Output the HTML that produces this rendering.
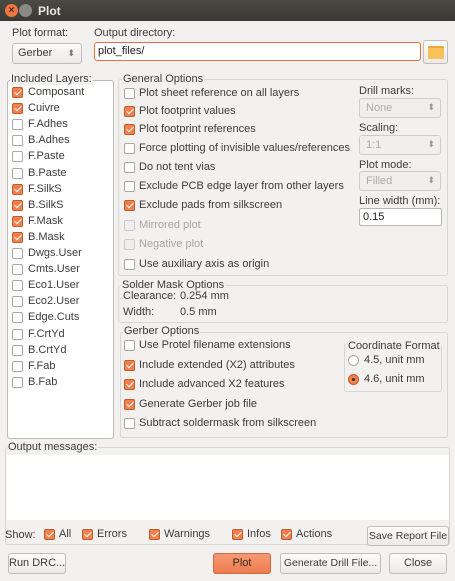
<!DOCTYPE html><html><head><style>
*{box-sizing:border-box;margin:0;padding:0}
body{width:455px;height:581px;background:#f2f1f0;font-family:"Liberation Sans",sans-serif;font-size:11px;color:#3c3c3c;position:relative;overflow:hidden}
.a{position:absolute;white-space:nowrap}
.cb{position:absolute;width:11px;height:11px;border:1px solid #a8a8a8;border-radius:2px;background:#fff}
.cb.on{background:#f0814f;border-color:#c45a2a}
.cb.on::after{content:"";position:absolute;left:3px;top:0px;width:3px;height:6px;border:solid #fff;border-width:0 1.6px 1.6px 0;transform:rotate(45deg)}
.cb.dis{background:#eee;border-color:#ccc}
.grp{position:absolute;border:1px solid #d8d7d5;border-radius:3px}
.gt{position:absolute;background:#f2f1f0;padding:0 1px;line-height:12px;white-space:nowrap}
.sel{position:absolute;border:1px solid #cfcdca;border-radius:3px;background:#f0efee;color:#aaa;padding:3px 6px;font-size:11px}
.sel::after{content:"⬍";position:absolute;right:5px;top:3px;font-size:9px;color:#999}
.btn{position:absolute;border:1px solid #c0bebb;border-radius:3px;background:linear-gradient(#fbfbfa,#eceae8);text-align:center;line-height:19px;color:#3c3c3c;white-space:nowrap;overflow:hidden}
</style></head><body>
<div class="a" style="left:0;top:0;width:455px;height:21px;background:linear-gradient(#4a4944,#3a3935)"></div>
<div class="a" style="left:5px;top:4px;width:13px;height:13px;border-radius:50%;background:#f0763f;color:#3a2a20;font-size:10px;line-height:13px;text-align:center;font-weight:bold">×</div>
<div class="a" style="left:19px;top:4px;width:13px;height:13px;border-radius:50%;background:#8a8984"></div>
<div class="a" style="left:38px;top:4px;color:#e8e6e2;font-weight:bold;font-size:12px">Plot</div>

<div class="a" style="left:12px;top:27px">Plot format:</div>
<div class="btn" style="left:12px;top:43px;width:70px;height:21px;text-align:left;padding-left:5px">Gerber<span style="position:absolute;right:6px;top:0;font-size:9px;color:#777">⬍</span></div>
<div class="a" style="left:94px;top:27px">Output directory:</div>
<div class="a" style="left:94px;top:42px;width:327px;height:19px;border:1px solid #e0733d;border-radius:3px;background:#fff;padding:2px 3px;color:#222">plot_files/</div>
<div class="btn" style="left:423px;top:40px;width:25px;height:24px"><div class="a" style="left:4px;top:5px;width:16px;height:13px;background:#f8c25a;border-radius:1px;border-top:2px solid #e8a83a"></div></div>

<div class="grp" style="left:7px;top:80px;width:107px;height:359px;background:#fff;border-color:#bdbbb8"></div>
<div class="gt" style="left:10px;top:73px">Included Layers:</div>

<div class="grp" style="left:118px;top:79px;width:330px;height:197px"></div>
<div class="gt" style="left:122px;top:73px">General Options</div>

<div class="a" style="left:359px;top:85px">Drill marks:</div>
<div class="sel" style="left:359px;top:98px;width:82px;height:20px">None</div>
<div class="a" style="left:359px;top:122px">Scaling:</div>
<div class="sel" style="left:359px;top:135px;width:82px;height:20px">1:1</div>
<div class="a" style="left:359px;top:159px">Plot mode:</div>
<div class="sel" style="left:359px;top:171px;width:82px;height:20px">Filled</div>
<div class="a" style="left:359px;top:195px">Line width (mm):</div>
<div class="a" style="left:359px;top:208px;width:83px;height:18px;border:1px solid #b8b6b3;border-radius:2px;background:#fff;padding:2px 3px;color:#222">0.15</div>

<div class="grp" style="left:118px;top:285px;width:330px;height:38px"></div>
<div class="gt" style="left:121px;top:279px">Solder Mask Options</div>
<div class="a" style="left:123px;top:290px">Clearance:</div><div class="a" style="left:180px;top:290px">0.254 mm</div>
<div class="a" style="left:123px;top:306px">Width:</div><div class="a" style="left:180px;top:306px">0.5 mm</div>

<div class="grp" style="left:120px;top:332px;width:328px;height:106px"></div>
<div class="gt" style="left:123px;top:325px">Gerber Options</div>
<div class="grp" style="left:344px;top:344px;width:98px;height:48px"></div>
<div class="gt" style="left:347px;top:340px">Coordinate Format</div>
<div class="a" style="left:348px;top:355px;width:11px;height:11px;border-radius:50%;border:1px solid #aaa;background:#fff"></div>
<div class="a" style="left:364px;top:354px">4.5, unit mm</div>
<div class="a" style="left:348px;top:374px;width:11px;height:11px;border-radius:50%;border:1px solid #c45a2a;background:#f0814f"><div class="a" style="left:3px;top:3px;width:3px;height:3px;border-radius:50%;background:#333"></div></div>
<div class="a" style="left:364px;top:373px">4.6, unit mm</div>

<div class="grp" style="left:5px;top:447px;width:445px;height:98px"></div>
<div class="gt" style="left:7px;top:441px">Output messages:</div>
<div class="a" style="left:7px;top:455px;width:442px;height:65px;background:#fff"></div>
<div class="a" style="left:5px;top:529px">Show:</div>
<div class="btn" style="left:367px;top:526px;width:82px;height:20px;font-size:10.5px">Save Report File</div>

<div class="btn" style="left:8px;top:553px;width:58px;height:21px">Run DRC...</div>
<div class="btn" style="left:213px;top:553px;width:58px;height:21px;background:linear-gradient(#f59a72,#ee7c50);border-color:#d0663c;color:#3c2a20">Plot</div>
<div class="btn" style="left:280px;top:553px;width:101px;height:21px;font-size:10.5px">Generate Drill File...</div>
<div class="btn" style="left:389px;top:553px;width:58px;height:21px">Close</div>

<script>
function cb(x,y,st,t,tx,dis){var d=document.createElement('div');d.className='cb'+(st?' on':'')+(dis?' dis':'');d.style.left=x+'px';d.style.top=(y-6)+'px';document.body.appendChild(d);
var s=document.createElement('div');s.className='a';s.style.left=tx+'px';s.style.top=(y-7)+'px';s.textContent=t;if(dis)s.style.color='#a5a5a5';document.body.appendChild(s);}
var L=[["Composant",1],["Cuivre",1],["F.Adhes",0],["B.Adhes",0],["F.Paste",0],["B.Paste",0],["F.SilkS",1],["B.SilkS",1],["F.Mask",1],["B.Mask",1],["Dwgs.User",0],["Cmts.User",0],["Eco1.User",0],["Eco2.User",0],["Edge.Cuts",0],["F.CrtYd",0],["B.CrtYd",0],["F.Fab",0],["B.Fab",0]];
L.forEach(function(l,i){cb(12,93+i*16.1,l[1],l[0],28)});
var G=[["Plot sheet reference on all layers",0,94],["Plot footprint values",1,112],["Plot footprint references",1,130],["Force plotting of invisible values/references",0,149],["Do not tent vias",0,168],["Exclude PCB edge layer from other layers",0,187],["Exclude pads from silkscreen",1,206],["Mirrored plot",0,226,1],["Negative plot",0,245,1],["Use auxiliary axis as origin",0,265]];
G.forEach(function(g){cb(124,g[2],g[1],g[0],139,g[3])});
var R=[["Use Protel filename extensions",0,346],["Include extended (X2) attributes",1,366],["Include advanced X2 features",1,385],["Generate Gerber job file",1,405],["Subtract soldermask from silkscreen",0,424]];
R.forEach(function(g){cb(124,g[2],g[1],g[0],139)});
[["All",44,59],["Errors",82,97],["Warnings",149,164],["Infos",232,247],["Actions",281,296]].forEach(function(s){cb(s[1],535,1,s[0],s[2])});
</script>
</body></html>
